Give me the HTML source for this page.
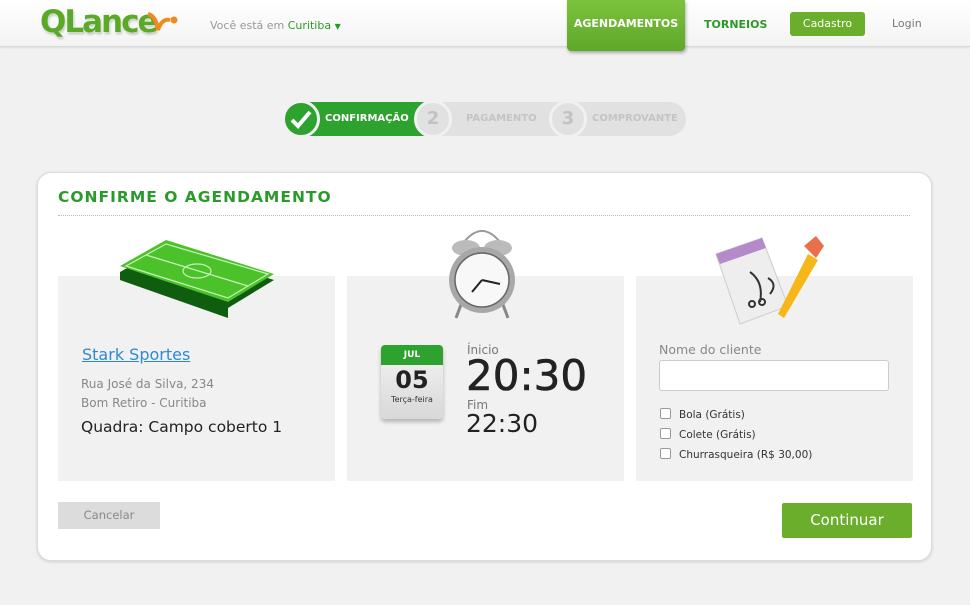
<!DOCTYPE html>
<html><head><meta charset="utf-8"><style>
*{margin:0;padding:0;box-sizing:border-box}
body{width:970px;height:605px;background:#f2f1f1;font-family:"DejaVu Sans","Liberation Sans",sans-serif;position:relative;overflow:hidden}
.abs{position:absolute}
#hdr{left:0;top:0;width:970px;height:47px;background:linear-gradient(#fff,#f3f3f3);border-bottom:1px solid #d8d8d8;box-shadow:0 1px 2px rgba(0,0,0,.08)}
.card{left:37px;top:172px;width:895px;height:389px;background:#fff;border:1px solid #dcdcdc;border-radius:14px;box-shadow:0 1px 3px rgba(0,0,0,.15)}
.panel{top:276px;width:277px;height:205px;background:#f2f1f1}
.cb{display:inline-block;width:11px;height:11px;border:1px solid #999;border-radius:2px;background:#fff;vertical-align:-1px;margin-right:8px}
</style></head><body>
<div id="hdr" class="abs"></div>
<div class="abs" style="left:40px;top:4px;font:bold 31px 'DejaVu Sans',sans-serif;color:#5aaa28;letter-spacing:-2px;text-shadow:0 0 2px #fff,1px 2px 2px rgba(0,0,0,.25)">QLance</div>
<svg class="abs" style="left:146px;top:8px" width="34" height="26"><path d="M2 6 Q10 8 12 22 Q16 10 24 12" stroke="#f08a1c" stroke-width="4" fill="none"/><circle cx="28" cy="12" r="3.5" fill="#f08a1c"/></svg>
<div class="abs" style="left:210px;top:19px;font-size:11px;color:#999">Você está em <span style="color:#2a9a2a">Curitiba</span> <span style="color:#2a9a2a;font-size:8px">▼</span></div>
<div class="abs" style="left:567px;top:0;width:118px;height:51px;background:linear-gradient(#7cc23c,#5ea82a);border-radius:0 0 4px 4px;box-shadow:1px 2px 3px rgba(0,0,0,.3);color:#fff;font-weight:bold;font-size:11px;text-align:center;line-height:48px">AGENDAMENTOS</div>
<div class="abs" style="left:704px;top:18px;font-weight:bold;font-size:11px;color:#2a9a2a">TORNEIOS</div>
<div class="abs" style="left:790px;top:12px;width:75px;height:24px;background:#6aae2c;border-radius:3px;color:#fff;font-size:11px;text-align:center;line-height:24px">Cadastro</div>
<div class="abs" style="left:892px;top:17px;font-size:11px;color:#777">Login</div>

<div class="abs" style="left:284px;top:102px;width:402px;height:34px;background:#e1e1e1;border-radius:17px"></div>
<div class="abs" style="left:284px;top:102px;width:150px;height:34px;background:#2ea22e;border-radius:17px 0 0 17px"></div>
<div class="abs" style="left:282px;top:100px;width:38px;height:38px;border-radius:50%;background:#2ea22e;border:3px solid #f2f1f1"></div>
<svg class="abs" style="left:289px;top:108px" width="24" height="22"><path d="M3 12 L9 18 L21 4" stroke="#fff" stroke-width="4" fill="none"/></svg>
<div class="abs" style="left:325px;top:113px;font-weight:bold;font-size:10px;color:#fff">CONFIRMAÇÃO</div>
<div class="abs" style="left:414px;top:100px;width:38px;height:38px;border-radius:50%;background:#e1e1e1;border:3px solid #f2f1f1;color:#c2c2c2;font-weight:bold;font-size:18px;text-align:center;line-height:32px">2</div>
<div class="abs" style="left:466px;top:113px;font-weight:bold;font-size:10px;color:#c4c4c4">PAGAMENTO</div>
<div class="abs" style="left:549px;top:100px;width:38px;height:38px;border-radius:50%;background:#e1e1e1;border:3px solid #f2f1f1;color:#c2c2c2;font-weight:bold;font-size:18px;text-align:center;line-height:32px">3</div>
<div class="abs" style="left:592px;top:113px;font-weight:bold;font-size:10px;color:#c4c4c4">COMPROVANTE</div>

<div class="abs card"></div>
<div class="abs" style="left:58px;top:188px;font-weight:bold;font-size:15.5px;color:#2a9a2a;letter-spacing:1px">CONFIRME O AGENDAMENTO</div>
<div class="abs" style="left:58px;top:215px;width:852px;border-top:1px dotted #bbb"></div>

<div class="abs panel" style="left:58px"></div>
<div class="abs panel" style="left:347px"></div>
<div class="abs panel" style="left:636px"></div>

<svg class="abs" style="left:118px;top:236px" width="158" height="88"><polygon points="2,36 48,10 156,44 110,72 110,82 2,44" fill="#0f5e10"/><polygon points="2,30 48,4 156,38 110,66" fill="#4cc22a"/><g stroke="#c8f0b8" stroke-width="1.2" fill="none"><polygon points="8,30 48,8 150,38 110,62"/><line x1="28" y1="19" x2="130" y2="50"/><ellipse cx="79" cy="35" rx="14" ry="7"/></g></svg>
<div class="abs" style="left:82px;top:345px;font-size:16px;color:#2a8ad8;text-decoration:underline">Stark Sportes</div>
<div class="abs" style="left:81px;top:375px;font-size:12px;color:#888;line-height:19px">Rua José da Silva, 234<br>Bom Retiro - Curitiba</div>
<div class="abs" style="left:81px;top:418px;font-size:15.5px;color:#222">Quadra: Campo coberto 1</div>

<svg class="abs" style="left:442px;top:222px" width="80" height="100"><path d="M22 20 Q40 -2 58 20" stroke="#999" stroke-width="2" fill="none"/><ellipse cx="24" cy="26" rx="14" ry="8" fill="#bbb"/><ellipse cx="56" cy="26" rx="14" ry="8" fill="#bbb"/><line x1="20" y1="80" x2="14" y2="96" stroke="#888" stroke-width="3"/><line x1="60" y1="80" x2="66" y2="96" stroke="#888" stroke-width="3"/><circle cx="40" cy="58" r="33" fill="#a8a8a8"/><circle cx="40" cy="58" r="27" fill="#f8f8f8" stroke="#666" stroke-width="1.5"/><path d="M40 58 L30 70 M40 58 L58 62" stroke="#222" stroke-width="2"/></svg>
<div class="abs" style="left:381px;top:345px;width:62px;height:74px;border-radius:4px;background:linear-gradient(#f4f4f4,#d8d8d8);box-shadow:0 3px 4px rgba(0,0,0,.25);overflow:hidden;text-align:center">
<div style="background:#2ea22e;color:#fff;font-weight:bold;font-size:9px;height:20px;line-height:20px">JUL</div>
<div style="font-weight:bold;font-size:24px;color:#222;line-height:30px">05</div>
<div style="font-size:8px;color:#333">Terça-feira</div></div>
<div class="abs" style="left:467px;top:343px;font-size:12px;color:#777">Ínicio</div>
<div class="abs" style="left:466px;top:352px;font-size:42px;color:#222;line-height:48px;-webkit-text-stroke:0.6px #222">20:30</div>
<div class="abs" style="left:467px;top:398px;font-size:12px;color:#777">Fim</div>
<div class="abs" style="left:466px;top:408px;font-size:25px;color:#222;line-height:32px">22:30</div>

<svg class="abs" style="left:712px;top:232px" width="115" height="95"><polygon points="4,22 50,6 76,74 28,92" fill="#eee" stroke="#ccc"/><polygon points="4,22 50,6 54,16 8,32" fill="#b48ac8"/><g stroke="#333" stroke-width="2" fill="none"><path d="M38 40 Q52 50 48 70"/><circle cx="40" cy="72" r="3"/><circle cx="50" cy="70" r="3"/><path d="M56 46 Q66 52 58 62"/></g><polygon points="66,82 96,22 106,28 72,86" fill="#f6b818"/><polygon points="92,14 104,4 112,14 104,26" fill="#e8704a"/></svg>
<div class="abs" style="left:659px;top:342px;font-size:12.5px;color:#888">Nome do cliente</div>
<div class="abs" style="left:659px;top:360px;width:230px;height:31px;background:#fff;border:1px solid #ccc;border-radius:3px"></div>
<div class="abs" style="left:660px;top:405px;font-size:10.5px;color:#333;line-height:20px">
<div><span class="cb"></span>Bola (Grátis)</div>
<div><span class="cb"></span>Colete (Grátis)</div>
<div><span class="cb"></span>Churrasqueira (R$ 30,00)</div></div>

<div class="abs" style="left:58px;top:502px;width:102px;height:27px;background:#dcdcdc;color:#888;font-size:11.5px;text-align:center;line-height:27px">Cancelar</div>
<div class="abs" style="left:782px;top:503px;width:130px;height:35px;background:#6aae2c;color:#fff;font-size:15px;text-align:center;line-height:35px;border-radius:2px">Continuar</div>
</body></html>
